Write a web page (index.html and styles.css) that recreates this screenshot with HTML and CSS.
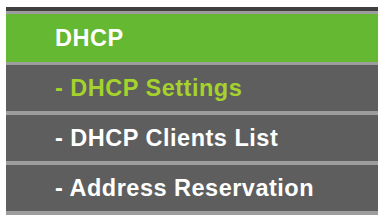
FILE: index.html
```html
<!DOCTYPE html>
<html lang="en">
<head>
    <meta charset="UTF-8">
    <title>DHCP</title>
    <link rel="stylesheet" href="styles.css">
</head>
<body>
    <ul class="menu">
        <li class="menu-head">DHCP</li>
        <li class="menu-item active">- DHCP Settings</li>
        <li class="menu-item">- DHCP Clients List</li>
        <li class="menu-item">- Address Reservation</li>
    </ul>
</body>
</html>
```
FILE: styles.css
```css
body {
    margin: 0;
    padding: 7px 0 0 6px;
    background-color: #fff;
    font-family: "Liberation Sans", Arial, sans-serif;
}
.menu {
    list-style-type: none;
    margin: 0;
    padding: 0;
    width: 372px;
    border-top: 4px solid #3f3f3f;
}
.menu li {
    display: flex;
    align-items: center;
    padding-left: 49px;
    font-size: 23.5px;
    font-weight: bold;
    letter-spacing: 0.5px;
    color: #fff;
    background-color: #5e5e5e;
    height: 46px;
    border-bottom: 4px solid #9d9d9d;
}
.menu .menu-head {
    background-color: #64b832;
    height: 48px;
    border-top: 3px solid #9d9d9d;
    border-bottom: 3px solid #9d9d9d;
}
.menu .active {
    color: #a5d22c;
}
```
